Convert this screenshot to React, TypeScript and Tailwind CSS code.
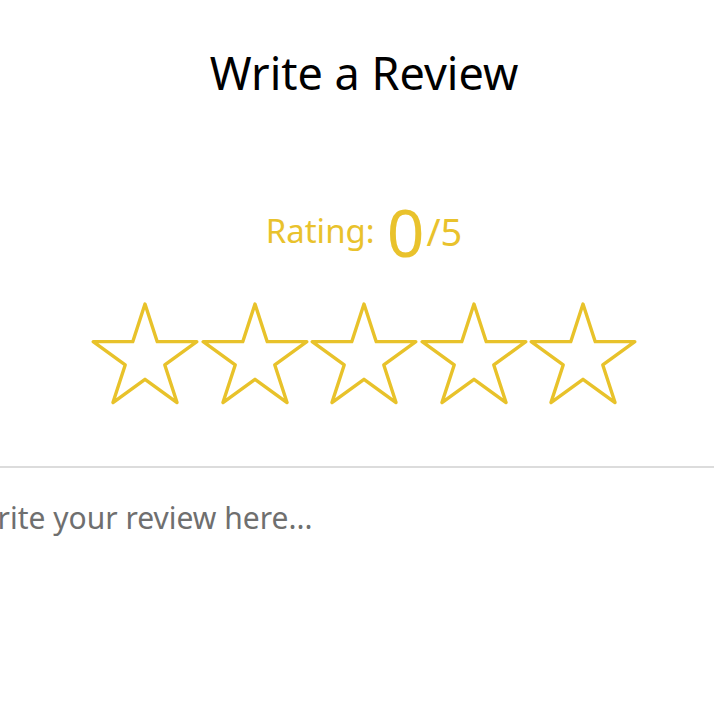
import React, { useState } from "react";

const Star = () => {
  // regular five-pointed star drawn from its outer / inner radius
  const cx = 55;
  const cy = 57.5;
  const R = 54.5;
  const r = R * 0.382;
  const pts: string[] = [];
  for (let i = 0; i < 10; i++) {
    const rad = i % 2 === 0 ? R : r;
    const a = (-90 + i * 36) * (Math.PI / 180);
    pts.push(`${(cx + rad * Math.cos(a)).toFixed(2)},${(cy + rad * Math.sin(a)).toFixed(2)}`);
  }
  return (
    <svg width="110" height="106" viewBox="0 0 110 106" className="-mx-[0.25px] overflow-visible">
      <polygon
        points={pts.join(" ")}
        fill="none"
        stroke="#e8c22a"
        strokeWidth="3.4"
        strokeLinejoin="round"
      />
    </svg>
  );
};

const App = () => {
  const [text, setText] = useState("");

  return (
    <div className="w-full min-h-[714px] bg-white font-['Noto_Sans','Open_Sans',sans-serif] overflow-hidden">
      <div className="flex flex-col items-center pl-[14px]">
        <h1 className="mt-[50px] text-[45px] leading-[45px] text-black">Write a Review</h1>

        <div className="mt-[103px] flex items-center text-[#e9c22c]">
          <span className="text-[33px] leading-[40px]">Rating:</span>
          <span className="ml-[12px] text-[66px] leading-[66px]">0</span>
          <span className="ml-[2px] text-[38px] leading-[40px]">/5</span>
        </div>

        <div className="mt-[37px] flex">
          {[0, 1, 2, 3, 4].map((i) => (
            <Star key={i} />
          ))}
        </div>
      </div>

      <div className="mt-[59px] border-t-2 border-[#dcdcdc]">
        <textarea
          value={text}
          onChange={(e) => setText(e.target.value)}
          placeholder="Write your review here..."
          className="block -ml-[30px] w-[calc(100%+30px)] h-[230px] pt-[32px] text-[30px] leading-[36px] text-[#333] placeholder:text-[#6f6f6f] outline-none resize-none"
        />
      </div>
    </div>
  );
};

export default App;
